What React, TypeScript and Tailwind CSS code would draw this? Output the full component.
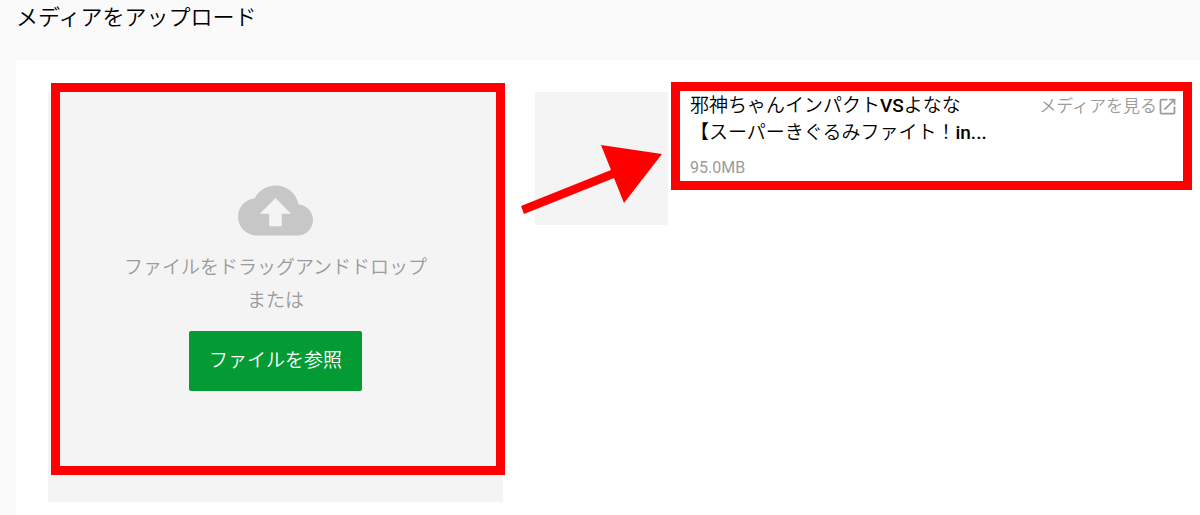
import type { ReactNode } from "react";
import { MdCloudUpload, MdOpenInNew } from "react-icons/md";

type MediaItemProps = {
  title: ReactNode;
  size: string;
  href: string;
};

function DropZone() {
  return (
    <section className="relative flex h-[410px] flex-col items-center bg-[#f4f4f4] pt-[81px]">
      <MdCloudUpload aria-hidden className="size-[75px] text-[#c7c7c7]" />
      <p className="mt-[3px] text-center text-[19px] leading-[33px] text-[#9b9b9b]">
        ファイルをドラッグアンドドロップ
        <br />
        または
      </p>
      <button
        type="button"
        className="mt-[14px] h-[60px] rounded-[2px] bg-[#049a34] px-5 text-[19px] text-white"
      >
        ファイルを参照
      </button>
      <div className="pointer-events-none absolute -top-[9px] -right-[2px] bottom-[27px] left-[3px] border-[9px] border-[#ff0000]" />
    </section>
  );
}

function MediaItem({ title, size, href }: MediaItemProps) {
  return (
    <article className="flex items-start">
      <div className="size-[133px] shrink-0 bg-[#f4f4f4]" />
      <div className="relative flex grow items-start justify-between pl-[22px]">
        <div>
          <h2 className="text-[19px] leading-[27px] text-black">{title}</h2>
          <p className="mt-2 text-base leading-[27px] font-normal text-[#9b9b9b]">{size}</p>
        </div>
        <a
          href={href}
          className="flex shrink-0 items-center pt-px text-[17px] leading-[27px] text-[#9b9b9b]"
        >
          メディアを見る
          <MdOpenInNew aria-hidden className="size-[21px]" />
        </a>
        <div className="pointer-events-none absolute -top-[10px] -right-[14px] left-[3px] h-[108px] border-[9px] border-[#ff0000]" />
      </div>
    </article>
  );
}

function Arrow() {
  return (
    <svg
      aria-hidden
      viewBox="0 0 142 72"
      className="pointer-events-none absolute top-[53px] -left-[14px] h-[72px] w-[142px]"
      fill="#ff0000"
    >
      <path d="M0 61 90 25 80 0 141 9 103 58 93 33 3 69Z" />
    </svg>
  );
}

export default function App() {
  return (
    <div className="flex min-h-screen flex-col bg-[#fafafa] pl-4 font-['Roboto','Noto_Sans_CJK_JP',sans-serif] font-[350]">
      <h1 className="pt-1 pb-7 text-[22px] leading-7 text-black">メディアをアップロード</h1>
      <main className="grid grow grid-cols-[455fr_643fr] items-start gap-8 bg-white pt-8 pr-[22px] pb-3 pl-8">
        <DropZone />
        <div className="relative">
          <MediaItem
            title={
              <>
                邪神ちゃんインパクト<span className="font-medium">VS</span>よなな
                <br />
                【スーパーきぐるみファイト！<span className="font-medium">in...</span>
              </>
            }
            size="95.0MB"
            href="#media"
          />
          <Arrow />
        </div>
      </main>
    </div>
  );
}
